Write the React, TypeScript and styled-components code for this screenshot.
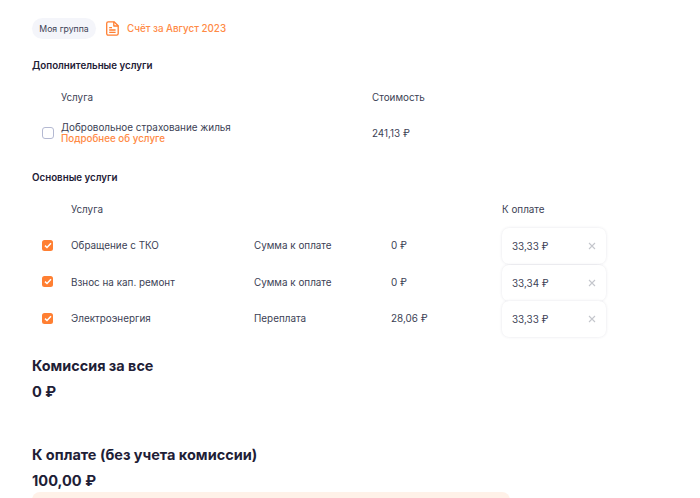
import React from "react";
import styled, { createGlobalStyle } from "styled-components";

const GlobalStyle = createGlobalStyle`
  html, body {
    margin: 0;
    padding: 0;
    background: #fff;
    overflow: hidden;
  }
  body {
    font-family: Inter, "Noto Sans", sans-serif;
    color: #2b2d42;
  }
`;

const mainServices = [
  { name: "Обращение с ТКО", label: "Сумма к оплате", amount: "0 ₽", pay: "33,33 ₽" },
  { name: "Взнос на кап. ремонт", label: "Сумма к оплате", amount: "0 ₽", pay: "33,34 ₽" },
  { name: "Электроэнергия", label: "Переплата", amount: "28,06 ₽", pay: "33,33 ₽" },
];

const FileIcon = () => (
  <svg width="13" height="15" viewBox="0 0 13 15" fill="none" stroke="#ff7f32" strokeWidth="1.3">
    <path d="M2.2 .8H8L12.2 4.8V12.6C12.2 13.5 11.5 14.2 10.6 14.2H2.2C1.3 14.2 .7 13.5 .7 12.6V2.4C.7 1.5 1.3 .8 2.2 .8Z" strokeLinejoin="round" />
    <path d="M7.8 .8V5H12.2" strokeLinejoin="round" />
    <path d="M3.2 6.6H6M3.2 9H9.6M3.2 11.4H9.6" />
  </svg>
);

const App: React.FC = () => {
  return (
    <Page>
      <GlobalStyle />
      <TopRow>
        <Pill>Моя группа</Pill>
        <InvoiceLink>
          <FileIcon />
          <span>Счёт за Август 2023</span>
        </InvoiceLink>
      </TopRow>

      <SectionTitle>Дополнительные услуги</SectionTitle>
      <ExtraHead>
        <HeadCell>Услуга</HeadCell>
        <HeadCell>Стоимость</HeadCell>
      </ExtraHead>
      <ExtraRow>
        <EmptyBox />
        <div>
          <Cell>Добровольное страхование жилья</Cell>
          <MoreLink>Подробнее об услуге</MoreLink>
        </div>
        <Cell>241,13 ₽</Cell>
      </ExtraRow>

      <MainTitle>Основные услуги</MainTitle>
      <MainHead>
        <HeadCell>Услуга</HeadCell>
        <HeadCell>К оплате</HeadCell>
      </MainHead>
      <MainList>
        {mainServices.map((s) => (
          <MainRow key={s.name}>
            <CheckedBox>
              <svg width="8" height="7" viewBox="0 0 8 7" fill="none" stroke="#fff" strokeWidth="1.5">
                <path d="M1 3.6L3 5.5L7 1.2" />
              </svg>
            </CheckedBox>
            <RowCell>{s.name}</RowCell>
            <RowCell>{s.label}</RowCell>
            <RowCell>{s.amount}</RowCell>
            <PayCard>
              <span>{s.pay}</span>
              <ClearIcon viewBox="0 0 8 8">
                <path d="M1 1L7 7M7 1L1 7" />
              </ClearIcon>
            </PayCard>
          </MainRow>
        ))}
      </MainList>

      <TotalTitle>Комиссия за все</TotalTitle>
      <TotalValue>0 ₽</TotalValue>
      <PayTitle>К оплате (без учета комиссии)</PayTitle>
      <TotalValue>100,00 ₽</TotalValue>
      <Notice />
    </Page>
  );
};

export default App;

const Page = styled.div`
  width: 700px;
  height: 498px;
  padding: 18px 0 0 32px;
  box-sizing: border-box;
  overflow: hidden;
  position: relative;
`;

const TopRow = styled.div`
  display: flex;
  align-items: center;
  gap: 10px;
`;

const Pill = styled.div`
  height: 21px;
  width: 64px;
  box-sizing: border-box;
  display: flex;
  align-items: center;
  justify-content: center;
  border-radius: 11px;
  background: #f4f5fa;
  font-size: 8.7px;
  color: #3c3f55;
`;

const InvoiceLink = styled.div`
  display: flex;
  align-items: center;
  gap: 8px;
  font-size: 9.8px;
  font-weight: 500;
  color: #ff8a45;
  margin-top: -1px;
`;

const SectionTitle = styled.h3`
  margin: 20px 0 0;
  font-size: 9.75px;
  line-height: 14px;
  font-weight: 600;
  color: #1e2036;
`;

const MainTitle = styled(SectionTitle)`
  margin-top: 26px;
`;

const HeadCell = styled.div`
  font-size: 9.9px;
  line-height: 14px;
  color: #3c3f55;
`;

const Cell = styled.div`
  font-size: 9.9px;
  line-height: 12px;
  color: #3c3f55;
`;

const RowCell = styled(Cell)`
  padding-bottom: 2px;
`;

const ExtraHead = styled.div`
  display: grid;
  grid-template-columns: 311px auto;
  padding-left: 29px;
  margin-top: 17px;
`;

const ExtraRow = styled.div`
  display: grid;
  grid-template-columns: 19px 311px auto;
  align-items: center;
  padding-left: 10px;
  margin-top: 17px;
`;

const MoreLink = styled.div`
  font-size: 9.8px;
  line-height: 12px;
  font-weight: 500;
  color: #ff8a45;
`;

const EmptyBox = styled.div`
  width: 12px;
  height: 12px;
  box-sizing: border-box;
  border: 1.3px solid #b4b9d2;
  border-radius: 3px;
  background: #fff;
`;

const MainHead = styled.div`
  display: grid;
  grid-template-columns: 431px auto;
  padding-left: 39px;
  margin-top: 17px;
`;

const MainList = styled.div`
  margin-top: 12px;
  display: flex;
  flex-direction: column;
  gap: 0.5px;
`;

const MainRow = styled.div`
  display: grid;
  grid-template-columns: 29px 183px 137px 111px 104px;
  align-items: center;
  padding-left: 10px;
`;

const CheckedBox = styled.div`
  width: 11px;
  height: 11px;
  margin-bottom: 2px;
  border-radius: 2.5px;
  background: #ff7f32;
  display: flex;
  align-items: center;
  justify-content: center;
`;

const PayCard = styled.div`
  height: 36px;
  width: 104px;
  box-sizing: border-box;
  padding: 0 10px;
  display: flex;
  align-items: center;
  justify-content: space-between;
  border-radius: 7px;
  background: #fff;
  box-shadow: 0 0 3px rgba(40, 40, 70, 0.12);
  font-size: 9.9px;
  color: #3c3f55;
`;

const ClearIcon = styled.svg`
  width: 8px;
  height: 8px;
  fill: none;
  stroke: #c4c6cc;
  stroke-width: 1.1;
`;

const TotalTitle = styled.div`
  margin-top: 19px;
  font-size: 14.4px;
  line-height: 20px;
  font-weight: 700;
  color: #1e2036;
`;

const TotalValue = styled.div`
  margin-top: 6px;
  font-size: 14.6px;
  line-height: 20px;
  font-weight: 700;
  color: #1e2036;
`;

const PayTitle = styled(TotalTitle)`
  margin-top: 43px;
  font-size: 14.5px;
`;

const Notice = styled.div`
  margin-top: 1px;
  width: 478px;
  height: 40px;
  border-radius: 8px;
  background: #fff1e8;
`;
